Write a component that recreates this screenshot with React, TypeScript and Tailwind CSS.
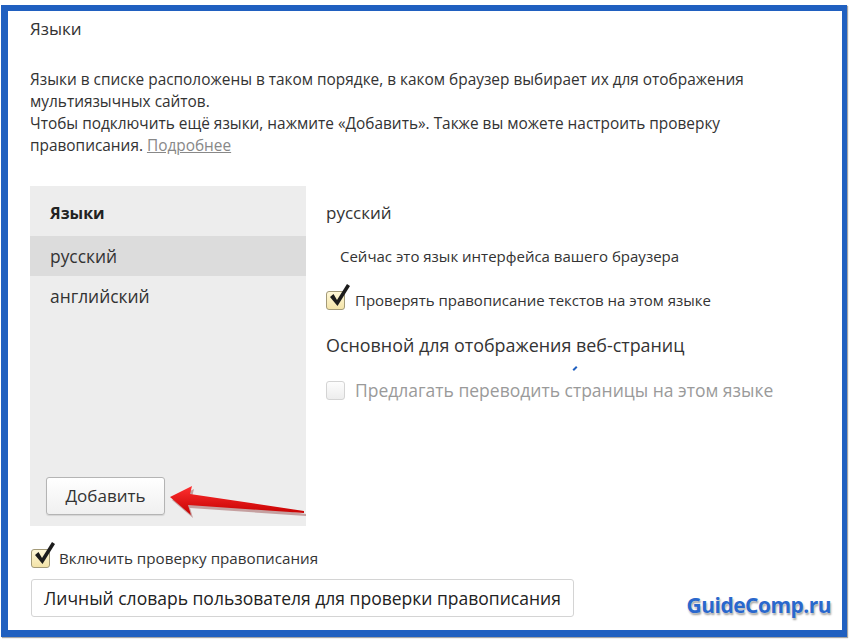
import React from "react";

const font = { fontFamily: '"Open Sans", "Noto Sans", sans-serif' };

const CheckBox = ({ checked, disabled }: { checked?: boolean; disabled?: boolean }) => (
  <span className="relative inline-block w-[19px] h-[19px] shrink-0">
    <span
      className={`absolute inset-0 rounded-[3px] border ${
        disabled
          ? "border-[#d4d4d4] bg-gradient-to-b from-[#fdfdfd] to-[#ededed]"
          : "border-[#a39a78] bg-gradient-to-b from-[#fff8d8] to-[#f3e3a8]"
      }`}
    />
    {checked && (
      <svg className="absolute left-[2px] -top-[9px]" width="24" height="26" viewBox="0 0 24 26">
        <path d="M2 15 L5.5 12 L9 18 L19 2 L22 4 L9.5 24 Z" fill="#1c1c1c" />
      </svg>
    )}
  </span>
);

// red pointer next to the add button
const Arrow = () => (
  <svg className="absolute left-[160px] top-[473px]" width="140" height="40" viewBox="0 0 140 40">
    <defs>
      <linearGradient id="ar" x1="0" y1="0" x2="0" y2="1">
        <stop offset="0" stopColor="#ff3030" />
        <stop offset="1" stopColor="#c40000" />
      </linearGradient>
    </defs>
    <path d="M3 14 L25 3 L23 11 L137 28 L137 30 L21 22 L24 32 Z" fill="#7a1010" opacity="0.35" transform="translate(1 2)" />
    <path d="M2 13 L24 2 L22 10 L136 27 L136 29 L20 21 L23 31 Z" fill="url(#ar)" />
  </svg>
);

export default function App() {
  return (
    <div className="min-h-screen bg-white pt-[5px] pl-px" style={font}>
      <div className="w-[846px] h-[632px] border-[#2060c0] border-l-[7px] border-t-[6px] border-r-[5px] border-b-[7px] shadow-[1px_1px_1px_rgba(0,0,0,0.35)] bg-white text-[#333] pl-[22px] pt-[7px] relative">
        <h1 className="text-[17px] leading-[22px] font-normal">Языки</h1>
        <div className="mt-[29px] text-[15.4px] leading-[22px] w-[780px]">
          <p>Языки в списке расположены в таком порядке, в каком браузер выбирает их для отображения<br />мультиязычных сайтов.</p>
          <p>
            Чтобы подключить ещё языки, нажмите «Добавить». Также вы можете настроить проверку<br />правописания.{" "}
            <a className="text-[#888] underline">Подробнее</a>
          </p>
        </div>

        <div className="mt-[29px] flex gap-5">
          <div className="w-[276px] h-[340px] bg-[#ededed] flex flex-col">
            <div className="h-[50px] pt-[16px] pl-5 text-[16px] leading-[22px] font-bold text-[#222]">Языки</div>
            <div className="h-10 bg-[#dcdcdc] pl-5 flex items-center text-[17.4px]">русский</div>
            <div className="h-10 pl-5 flex items-center text-[17.4px]">английский</div>
            <div className="mt-auto mb-[11px] ml-4">
              <button className="w-[119px] h-[38px] rounded-[3px] border border-[#b4b4b4] bg-gradient-to-b from-white to-[#f0f0f0] text-[17px] text-[#333] shadow-[0_1px_1px_rgba(0,0,0,0.1)]">
                Добавить
              </button>
            </div>
          </div>

          <div className="flex flex-col">
            <div className="mt-[16px] text-[17px] leading-[22px]">русский</div>
            <div className="mt-[22px] ml-[14px] text-[15px] leading-[20px]">Сейчас это язык интерфейса вашего браузера</div>
            <div className="mt-[24px] flex items-center gap-[10px] text-[15px] leading-[20px]">
              <CheckBox checked />
              <span>Проверять правописание текстов на этом языке</span>
            </div>
            <div className="mt-[23px] text-[17.9px] leading-[24px]">Основной для отображения веб-страниц</div>
            <div className="mt-[22px] flex items-center gap-[10px] text-[17.5px] leading-[22px] text-[#9a9a9a]">
              <CheckBox disabled />
              <span>Предлагать переводить страницы на этом языке</span>
            </div>
          </div>
        </div>

        <div className="mt-[22px] ml-px flex items-center gap-[9px] text-[15.2px] leading-[20px]">
          <CheckBox checked />
          <span>Включить проверку правописания</span>
        </div>
        <button className="mt-[11px] ml-px h-[38px] px-3 rounded-[3px] border border-[#d4d4d4] bg-white text-[17.5px] text-[#222]">
          Личный словарь пользователя для проверки правописания
        </button>

        <Arrow />
        <span className="absolute left-[566px] top-[355px] w-[2px] h-[5px] bg-[#2060c0] rotate-45" />

        <div
          className="absolute right-[11px] bottom-[9px] text-[21px] font-bold text-[#2a68cc] tracking-tight"
          style={{ fontFamily: '"Open Sans", sans-serif', textShadow: "0 0 2px #fff, 1px 2px 2px rgba(0,0,0,0.4)" }}
        >
          GuideComp.ru
        </div>
      </div>
    </div>
  );
}
